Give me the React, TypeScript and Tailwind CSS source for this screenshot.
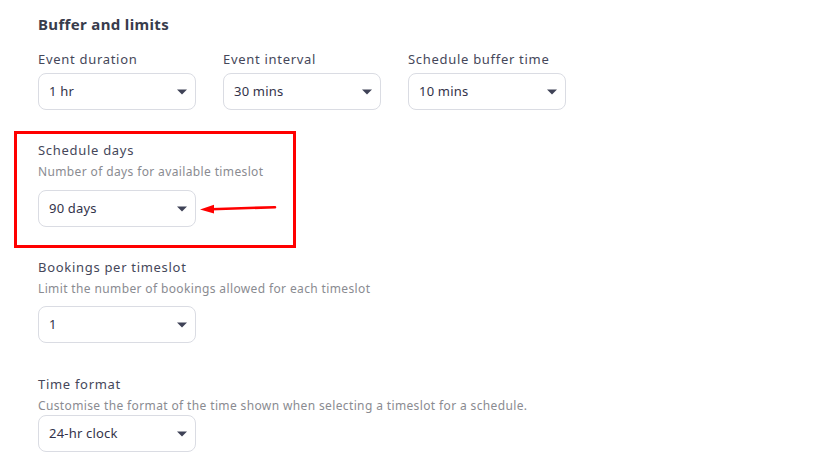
import React from 'react';

const FONT = { fontFamily: '"Noto Sans", "Open Sans", sans-serif' };

function Select({ value }: { value: string }) {
    return (
        <div className="flex h-[37px] w-[158px] items-center justify-between rounded-lg border border-[#dadce3] bg-white pl-[10px] pr-[8px]">
            <span className="text-[13px] tracking-[0.2px] text-[#33334a]">{value}</span>
            <svg width="10" height="6" viewBox="0 0 10 6" className="mt-[1px]">
                <path d="M0 0.5 L10 0.5 L5 5.5 Z" fill="#3f4257" />
            </svg>
        </div>
    );
}

function Label({ children }: { children: React.ReactNode }) {
    return <div className="text-[13px] leading-5 tracking-[0.7px] text-[#45475a]">{children}</div>;
}

function Hint({ children }: { children: React.ReactNode }) {
    return <div className="mt-[3px] text-[12px] leading-[18px] tracking-[0.37px] text-[#8a8b91]">{children}</div>;
}

export default function App() {
    return (
        <div className="min-h-[463px] w-[825px] bg-white pl-[38px] pt-[14px]" style={FONT}>
            <h2 className="text-[15px] font-bold leading-5 tracking-[0.35px] text-[#383c4c]">Buffer and limits</h2>

            <div className="mt-[15px] flex gap-[27px]">
                {[
                    ['Event duration', '1 hr'],
                    ['Event interval', '30 mins'],
                    ['Schedule buffer time', '10 mins'],
                ].map(([label, value]) => (
                    <div key={label} className="flex flex-col gap-[4px]">
                        <Label>{label}</Label>
                        <Select value={value} />
                    </div>
                ))}
            </div>

            {/* highlighted section */}
            <div className="relative -ml-[24px] mt-[21px] w-[282px] border-[3px] border-[#ff0000] pb-[18px] pl-[21px] pt-[6px]">
                <Label>Schedule days</Label>
                <Hint>Number of days for available timeslot</Hint>
                <div className="mt-[9px]">
                    <Select value="90 days" />
                </div>
                <svg className="absolute left-[182px] top-[67px]" width="82" height="14" viewBox="0 0 82 14">
                    <path d="M12 8.2 L76 6.2" stroke="#ff0000" strokeWidth="2.6" strokeLinecap="round" />
                    <path d="M1 8.4 L15 3.8 L15 12.6 Z" fill="#ff0000" />
                </svg>
            </div>

            <div className="mt-[9px]">
                <Label>Bookings per timeslot</Label>
                <Hint>Limit the number of bookings allowed for each timeslot</Hint>
                <div className="mt-[8px]">
                    <Select value="1" />
                </div>
            </div>

            <div className="mt-[31px]">
                <Label>Time format</Label>
                <Hint>Customise the format of the time shown when selecting a timeslot for a schedule.</Hint>
                <Select value="24-hr clock" />
            </div>
        </div>
    );
}
